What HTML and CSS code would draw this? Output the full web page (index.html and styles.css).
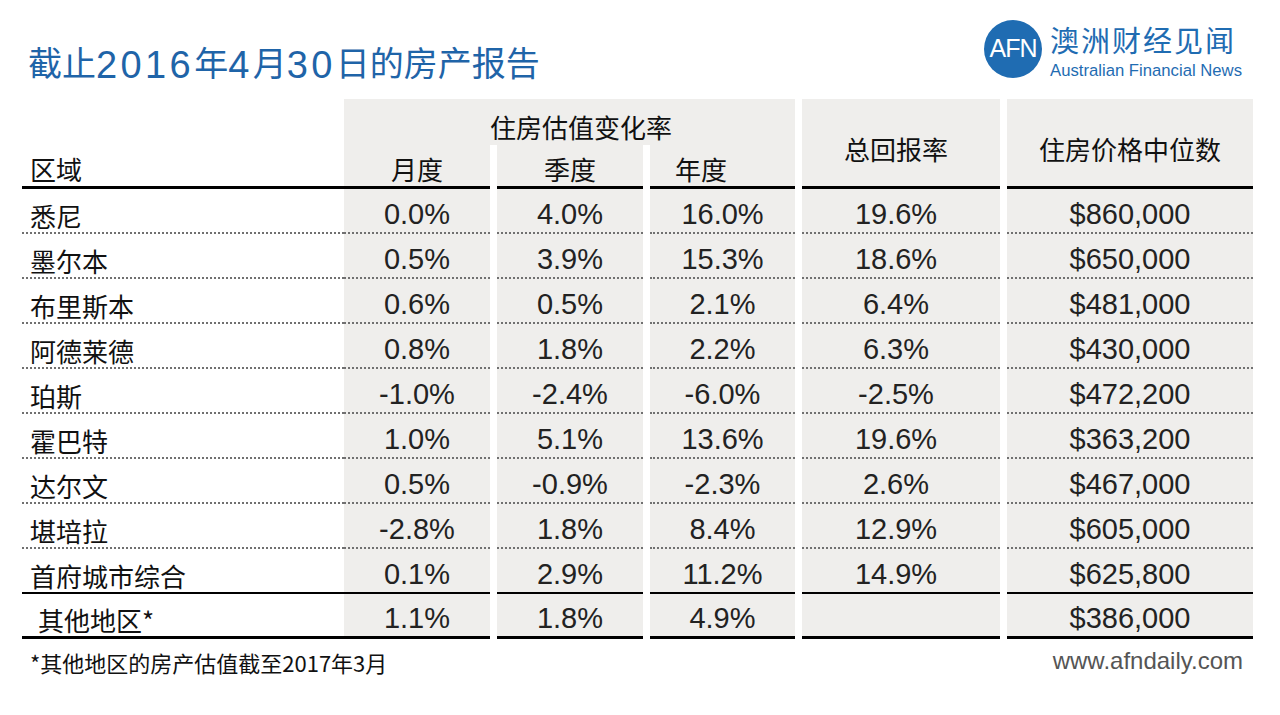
FILE: index.html
```html
<!DOCTYPE html>
<html lang="zh-CN">
<head>
<meta charset="utf-8">
<title>截止2016年4月30日的房产报告</title>
<link rel="stylesheet" href="styles.css">
</head>
<body>
<div class="slide">
  <header class="top">
    <h1 class="title">截止<span class="d">2016</span>年<span class="d">4</span>月<span class="d">30</span>日的房产报告</h1>
    <div class="logo">
      <svg class="logo-mark" width="58" height="58" viewBox="0 0 58 58">
        <circle cx="29" cy="29" r="29" class="logo-disc"/>
        <text x="29" y="37" text-anchor="middle" class="logo-afn">AFN</text>
      </svg>
      <div class="logo-text">
        <div class="logo-cn">澳洲财经见闻</div>
        <div class="logo-en">Australian Financial News</div>
      </div>
    </div>
  </header>

  <div class="table">
    <div class="cell h-region">区域</div>
    <div class="cell h-group">住房估值变化率</div>
    <div class="cell h-sub m">月度</div>
    <div class="cell h-sub q">季度</div>
    <div class="cell h-sub y">年度</div>
    <div class="cell h-tall ret">总回报率</div>
    <div class="cell h-tall med">住房价格中位数</div>

    <div class="cell r">悉尼</div><div class="cell n">0.0%</div><div class="cell n">4.0%</div><div class="cell n">16.0%</div><div class="cell n rt">19.6%</div><div class="cell n">$860,000</div>
    <div class="cell r">墨尔本</div><div class="cell n">0.5%</div><div class="cell n">3.9%</div><div class="cell n">15.3%</div><div class="cell n rt">18.6%</div><div class="cell n">$650,000</div>
    <div class="cell r">布里斯本</div><div class="cell n">0.6%</div><div class="cell n">0.5%</div><div class="cell n">2.1%</div><div class="cell n rt">6.4%</div><div class="cell n">$481,000</div>
    <div class="cell r">阿德莱德</div><div class="cell n">0.8%</div><div class="cell n">1.8%</div><div class="cell n">2.2%</div><div class="cell n rt">6.3%</div><div class="cell n">$430,000</div>
    <div class="cell r">珀斯</div><div class="cell n">-1.0%</div><div class="cell n">-2.4%</div><div class="cell n">-6.0%</div><div class="cell n rt">-2.5%</div><div class="cell n">$472,200</div>
    <div class="cell r">霍巴特</div><div class="cell n">1.0%</div><div class="cell n">5.1%</div><div class="cell n">13.6%</div><div class="cell n rt">19.6%</div><div class="cell n">$363,200</div>
    <div class="cell r">达尔文</div><div class="cell n">0.5%</div><div class="cell n">-0.9%</div><div class="cell n">-2.3%</div><div class="cell n rt">2.6%</div><div class="cell n">$467,000</div>
    <div class="cell r">堪培拉</div><div class="cell n">-2.8%</div><div class="cell n">1.8%</div><div class="cell n">8.4%</div><div class="cell n rt">12.9%</div><div class="cell n">$605,000</div>
    <div class="cell r sum">首府城市综合</div><div class="cell n sum">0.1%</div><div class="cell n sum">2.9%</div><div class="cell n sum">11.2%</div><div class="cell n rt sum">14.9%</div><div class="cell n sum">$625,800</div>
    <div class="cell r last other">其他地区*</div><div class="cell n last">1.1%</div><div class="cell n last">1.8%</div><div class="cell n last">4.9%</div><div class="cell n rt last"></div><div class="cell n last">$386,000</div>
  </div>

  <footer class="foot">
    <span class="note">*其他地区的房产估值截至2017年3月</span>
    <span class="site">www.afndaily.com</span>
  </footer>
</div>
</body>
</html>
```

FILE: styles.css
```css
html, body {
  margin: 0;
  padding: 0;
  background: #ffffff;
}

body {
  width: 1280px;
  height: 715px;
  overflow: hidden;
  font-family: "Noto Sans CJK SC", "Liberation Sans", sans-serif;
  color: #111111;
}

.slide {
  width: 1280px;
  height: 715px;
}

/* ---------- header ---------- */
.top {
  display: flex;
  justify-content: space-between;
  align-items: flex-start;
  height: 99px;
  padding: 20px 38px 0 28px;
  box-sizing: border-box;
}

.title {
  margin: 22px 0 0 0;
  height: 40px;
  line-height: 40px;
  font-family: "Noto Sans CJK SC", sans-serif;
  font-size: 34px;
  font-weight: 400;
  color: #1f64a8;
  white-space: nowrap;
}

.title .d {
  font-family: "Liberation Sans", "Noto Sans CJK SC", sans-serif;
  font-size: 38px;
  letter-spacing: 3.4px;
  vertical-align: -2px;
}

.logo {
  display: flex;
  align-items: flex-start;
}

.logo-mark {
  display: block;
  width: 58px;
  height: 58px;
  margin-right: 8px;
}

.logo-disc {
  fill: #1f6cb2;
}

.logo-afn {
  fill: #ffffff;
  font-family: "Liberation Sans", sans-serif;
  font-size: 25px;
  letter-spacing: -1px;
}

.logo-text {
  padding-top: 3px;
  color: #1f6cb2;
}

.logo-cn {
  height: 32px;
  font-family: "Noto Sans CJK SC", sans-serif;
  font-size: 29px;
  line-height: 32px;
  letter-spacing: 2px;
  white-space: nowrap;
}

.logo-en {
  margin-top: 7px;
  height: 18px;
  font-family: "Liberation Sans", sans-serif;
  font-size: 16.7px;
  line-height: 18px;
  white-space: nowrap;
}

/* ---------- table ---------- */
.table {
  margin-left: 22px;
  width: 1231px;
  display: grid;
  grid-template-columns: 315px 146px 146px 145px 198px 246px;
  grid-template-rows: 46px 44px repeat(10, 45px);
  column-gap: 7px;
}

.cell {
  display: flex;
  align-items: flex-end;
  box-sizing: border-box;
  min-width: 0;
}

.h-region,
.h-group,
.h-sub,
.h-tall {
  font-family: "Noto Sans CJK SC", sans-serif;
  font-size: 26px;
  line-height: 30px;
  color: #111111;
  white-space: nowrap;
}

.h-region {
  grid-column: 1;
  grid-row: 1 / 3;
  margin-right: -7px;
  padding: 0 0 2px 8px;
  border-bottom: 3px solid #000000;
}

.h-group {
  grid-column: 2 / 5;
  grid-row: 1;
  align-items: flex-start;
  padding: 13px 0 0 146px;
  background: #efeeec;
}

.h-sub {
  grid-row: 2;
  justify-content: center;
  padding-bottom: 2px;
  background: #efeeec;
  border-bottom: 3px solid #000000;
}

.h-sub.m { grid-column: 2; }
.h-sub.q { grid-column: 3; }
.h-sub.y {
  grid-column: 4;
  justify-content: flex-start;
  padding-left: 25px;
}

.h-tall {
  grid-row: 1 / 3;
  justify-content: center;
  padding-bottom: 22px;
  background: #efeeec;
  border-bottom: 3px solid #000000;
}

.h-tall.ret {
  grid-column: 5;
  padding-right: 10px;
}

.h-tall.med {
  grid-column: 6;
}

/* data rows */
.r {
  margin-right: -7px;
  padding: 0 0 1px 8px;
  font-family: "Noto Sans CJK SC", sans-serif;
  font-size: 26px;
  line-height: 30px;
  color: #111111;
  white-space: nowrap;
  border-bottom: 2px dotted #707070;
}

.r.other {
  padding-left: 16px;
}

.n {
  justify-content: center;
  padding-bottom: 1px;
  font-family: "Liberation Sans", sans-serif;
  font-size: 29px;
  line-height: 33px;
  color: #222222;
  background: #efeeec;
  border-bottom: 2px dotted #707070;
  white-space: nowrap;
}

.n.rt {
  padding-right: 10px;
}

.cell.sum {
  border-bottom: 2px solid #000000;
}

.cell.last {
  border-bottom: 3px solid #000000;
}

/* ---------- footer ---------- */
.foot {
  display: flex;
  justify-content: space-between;
  align-items: baseline;
  margin: 10px 37px 0 30px;
}

.note {
  font-family: "Noto Sans CJK SC", sans-serif;
  font-size: 22px;
  line-height: 26px;
  color: #111111;
  white-space: nowrap;
}

.site {
  font-family: "Liberation Sans", sans-serif;
  font-size: 24px;
  line-height: 26px;
  color: #555555;
  white-space: nowrap;
  position: relative;
  top: -3px;
}
```
